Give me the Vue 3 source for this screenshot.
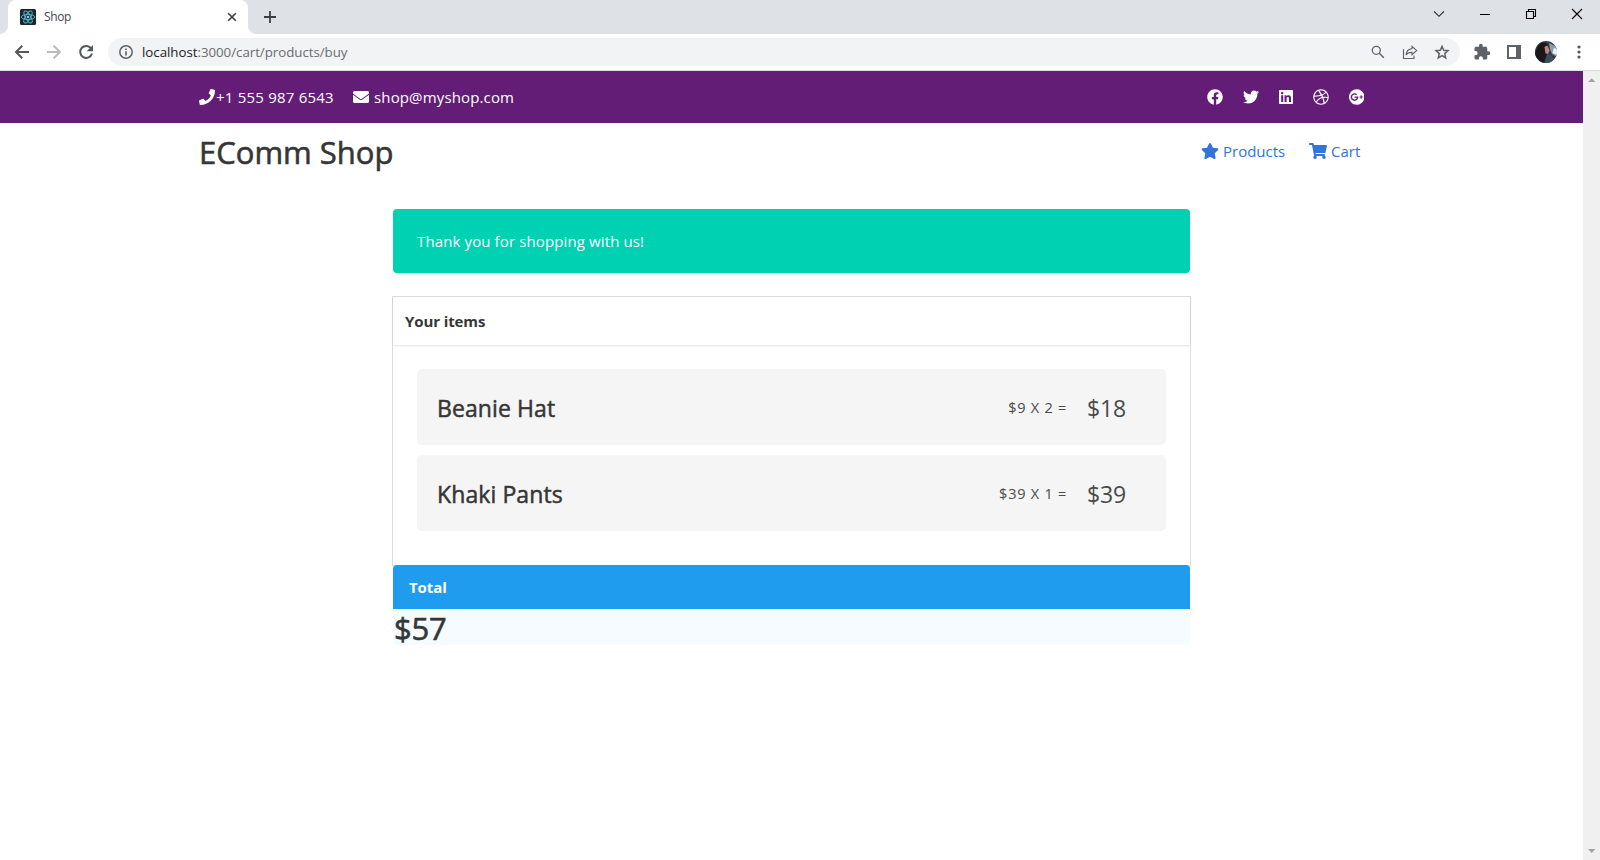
<script setup>
const socials = [
  { name: 'facebook', w: 512, d: 'M504 256C504 119 393 8 256 8S8 119 8 256c0 123.78 90.69 226.38 209.25 245V327.69h-63V256h63v-54.64c0-62.15 37-96.48 93.67-96.48 27.14 0 55.52 4.84 55.52 4.84v61h-31.28c-30.8 0-40.41 19.12-40.41 38.73V256h68.78l-11 71.69h-57.78V501C413.31 482.38 504 379.78 504 256z' },
  { name: 'twitter', w: 512, d: 'M459.37 151.716c.325 4.548.325 9.097.325 13.645 0 138.72-105.583 298.558-298.558 298.558-59.452 0-114.68-17.219-161.137-47.106 8.447.974 16.568 1.299 25.34 1.299 49.055 0 94.213-16.568 130.274-44.832-46.132-.975-84.792-31.188-98.112-72.772 6.498.974 12.995 1.624 19.818 1.624 9.421 0 18.843-1.3 27.614-3.573-48.081-9.747-84.143-51.98-84.143-102.985v-1.299c13.969 7.797 30.214 12.67 47.431 13.319-28.264-18.843-46.781-51.005-46.781-87.391 0-19.492 5.197-37.36 14.294-52.954 51.655 63.675 129.3 105.258 216.365 109.807-1.624-7.797-2.599-15.918-2.599-24.04 0-57.828 46.782-104.934 104.934-104.934 30.213 0 57.502 12.67 76.67 33.137 23.715-4.548 46.456-13.32 66.599-25.34-7.798 24.366-24.366 44.833-46.132 57.827 21.117-2.273 41.584-8.122 60.426-16.243-14.292 20.791-32.161 39.308-52.628 54.253z' },
  { name: 'linkedin', w: 448, d: 'M416 32H31.9C14.3 32 0 46.5 0 64.3v383.4C0 465.5 14.3 480 31.9 480H416c17.6 0 32-14.5 32-32.3V64.3c0-17.8-14.4-32.3-32-32.3zM135.4 416H69V202.2h66.5V416zm-33.2-243c-21.3 0-38.5-17.3-38.5-38.5S80.9 96 102.2 96c21.2 0 38.5 17.3 38.5 38.5 0 21.3-17.2 38.5-38.5 38.5zm282.1 243h-66.4V312c0-24.8-.5-56.7-34.5-56.7-34.6 0-39.9 27-39.9 54.9V416h-66.4V202.2h63.7v29.2h.9c8.9-16.8 30.6-34.5 62.9-34.5 67.2 0 79.7 44.3 79.7 101.9V416z' },
  { name: 'dribbble', w: 512, d: 'M256 8C119.252 8 8 119.252 8 256s111.252 248 248 248 248-111.252 248-248S392.748 8 256 8zm163.97 114.366c29.503 36.046 47.369 81.957 47.835 131.955-6.984-1.477-77.018-15.682-147.502-6.818-5.752-14.041-11.181-26.393-18.617-41.614 78.321-31.977 113.818-77.482 118.284-83.523zM396.421 97.87c-3.81 5.427-35.697 48.286-111.021 76.519-34.712-63.776-73.185-116.168-79.04-124.008 67.176-16.193 137.966 1.27 190.061 47.489zm-230.48-33.25c5.585 7.659 43.438 60.116 78.537 122.509-99.087 26.313-186.36 25.934-195.834 25.809C62.38 147.205 106.678 92.573 165.941 64.62zM44.17 256.323c0-2.166.043-4.322.108-6.473 9.268.19 111.92 1.513 217.706-30.146 6.064 11.868 11.857 23.915 17.174 35.949-76.599 21.575-146.194 83.527-180.531 142.306C64.794 360.405 44.17 310.73 44.17 256.323zm81.807 167.113c22.127-45.233 82.178-103.622 167.579-132.756 29.74 77.283 42.039 142.053 45.189 160.638-68.112 29.013-150.015 21.053-212.768-27.882zm248.38 8.489c-2.171-12.886-13.446-74.897-41.152-151.033 66.38-10.626 124.7 6.768 131.947 9.055-9.442 58.941-43.273 109.844-90.795 141.978z' },
  { name: 'gplus', w: 496, d: 'M248 8C111.1 8 0 119.1 0 256s111.1 248 248 248 248-111.1 248-248S384.9 8 248 8zm-70.7 372c-68.8 0-124-55.5-124-124s55.2-124 124-124c31.3 0 60.1 11 83 32.3l-33.6 32.6c-13.2-12.9-31.3-19.1-49.4-19.1-42.9 0-77.2 35.5-77.2 78.1s34.2 78.1 77.2 78.1c32.6 0 64.9-19.1 70.1-53.3h-70.1v-42.6h116.9c1.3 6.8 1.9 13.6 1.9 20.7 0 70.8-47.5 121.2-118.8 121.2zm230.2-106.2v35.5H372v-35.5h-35.5v-35.5H372v-35.5h35.5v35.5h35.2v35.5h-35.2z' },
]
const items = [
  { name: 'Beanie Hat', calc: '$9 X 2 =', sum: '$18' },
  { name: 'Khaki Pants', calc: '$39 X 1 =', sum: '$39' },
]
</script>

<template>
  <div class="window">
    <div class="tabstrip">
      <div class="tab">
        <svg class="favicon" width="16" height="16" viewBox="0 0 16 16">
          <rect width="16" height="16" rx="1.5" fill="#20232a" />
          <g fill="none" stroke="#53b9d6" stroke-width=".9">
            <ellipse cx="8" cy="8" rx="6.7" ry="2.6" />
            <ellipse cx="8" cy="8" rx="6.7" ry="2.6" transform="rotate(60 8 8)" />
            <ellipse cx="8" cy="8" rx="6.7" ry="2.6" transform="rotate(120 8 8)" />
          </g>
          <circle cx="8" cy="8" r="1.3" fill="#61dafb" />
        </svg>
        <span class="tab-title">Shop</span>
        <svg width="10" height="10" viewBox="0 0 10 10"><path d="M1.2 1.2l7.6 7.6M8.800 1.200L1.200 8.800" stroke="#3c4043" stroke-width="1.6" /></svg>
      </div>
      <svg class="plus" width="12" height="12" viewBox="0 0 12 12"><path d="M6 0v12M0 6h12" stroke="#3c4043" stroke-width="1.8" /></svg>
      <div class="controls">
        <svg width="12" height="12" viewBox="0 0 12 12"><path d="M1 3.300l5 5 5-5" fill="none" stroke="#222" stroke-width="1.1" /></svg>
        <svg width="12" height="12" viewBox="0 0 12 12"><path d="M1 6.500h10" stroke="#000" /></svg>
        <svg width="12" height="12" viewBox="0 0 12 12"><path d="M1.500 3.500h7v7h-7zM3.500 3.500v-2h7v7h-2" fill="none" stroke="#000" stroke-width="1.1" /></svg>
        <svg width="12" height="12" viewBox="0 0 12 12"><path d="M1 1l10 10M11 1L1 11" stroke="#000" stroke-width="1.1" /></svg>
      </div>
    </div>

    <div class="toolbar">
      <svg class="nav" width="16" height="16" viewBox="0 0 16 16"><path d="M15 8H2.500M8.300 1.700L2 8l6.300 6.300" fill="none" stroke="#54575b" stroke-width="2" /></svg>
      <svg class="nav" width="16" height="16" viewBox="0 0 16 16"><path d="M1 8h12.500M7.700 1.700L14 8l-6.300 6.300" fill="none" stroke="#b9bbbe" stroke-width="2" /></svg>
      <svg class="nav" width="16" height="16" viewBox="0 0 16 16"><path d="M13.300 4.700A6 6 0 1 0 14 9.500" fill="none" stroke="#54575b" stroke-width="2" /><path d="M15 1v6.300H8.700z" fill="#54575b" /></svg>
      <div class="omnibox">
        <svg width="14" height="14" viewBox="0 0 14 14"><circle cx="7" cy="7" r="6.200" fill="none" stroke="#5f6368" stroke-width="1.500" /><path d="M7 6.200v4.300M7 3.400v1.600" stroke="#5f6368" stroke-width="1.600" /></svg>
        <span class="url"><b>localhost</b>:3000/cart/products/buy</span>
        <svg class="glass" width="14" height="14" viewBox="0 0 14 14"><circle cx="5.300" cy="5.300" r="4" fill="none" stroke="#5f6368" stroke-width="1.300" /><path d="M8.300 8.300l4.500 4.500" stroke="#5f6368" stroke-width="1.500" /></svg>
        <svg class="share" width="16" height="16" viewBox="0 0 16 16"><path d="M1.500 5v9.500h10.500v-3M10 2.300l4.700 4.200L10 10.700V8.400C7.200 8.300 5.400 9 4 11c.4-3.500 2.400-6 6-6.400z" fill="none" stroke="#5f6368" stroke-width="1.100" /></svg>
        <svg width="16" height="16" viewBox="0 0 16 16"><path d="M8 2.300l1.700 4 4.300.4-3.300 2.900 1 4.300L8 11.600l-3.700 2.300 1-4.300L2 6.700l4.300-.4z" fill="none" stroke="#5f6368" stroke-width="1.500" /></svg>
      </div>
      <svg class="puzzle" width="18" height="18" viewBox="0 0 24 24"><path fill="#5f6368" d="M20.500 11H19V7c0-1.100-.9-2-2-2h-4V3.500a2.500 2.500 0 0 0-5 0V5H4c-1.100 0-2 .9-2 2v3.800h1.500a2.700 2.700 0 0 1 0 5.400H2V20c0 1.100.9 2 2 2h3.800v-1.500a2.700 2.700 0 0 1 5.400 0V22H17c1.100 0 2-.9 2-2v-4h1.500a2.500 2.500 0 0 0 0-5z" /></svg>
      <svg class="panel" width="14" height="14" viewBox="0 0 14 14"><path fill="#5f6368" fill-rule="evenodd" d="M0 0h14v14H0zM2 2v10h7V2z" /></svg>
      <svg class="avatar" width="22" height="22" viewBox="0 0 22 22">
        <defs><clipPath id="face"><circle cx="11" cy="11" r="11" /></clipPath></defs>
        <g clip-path="url(#face)">
          <rect width="22" height="22" fill="#343b44" />
          <path d="M14 2l8 4v10l-5-3-2-5z" fill="#8e9ea5" />
          <path d="M17.500 12l4.500 2V8l-3-1z" fill="#eef3f4" />
          <path d="M2 7Q6-1 12 3l2 4-1 8-3 7H0V12z" fill="#1b171b" />
          <path d="M9.500 6q3-2.500 4 .5l1 3-1.500 3.500-2.500-.5z" fill="#b98780" />
          <path d="M12 13l4 1 3 4-4 4H9z" fill="#3d4f56" />
        </g>
      </svg>
      <svg class="dots" width="4" height="14" viewBox="0 0 4 14"><g fill="#54575b"><circle cx="2" cy="2" r="1.600" /><circle cx="2" cy="7" r="1.600" /><circle cx="2" cy="12" r="1.600" /></g></svg>
    </div>

    <div class="viewport">
      <div class="page">
        <div class="topbar">
          <svg width="16" height="16" viewBox="0 0 512 512"><path fill="#fff" d="M493.400 24.600l-104-24c-11.300-2.600-22.900 3.300-27.500 13.900l-48 112c-4.200 9.800-1.400 21.300 6.900 28l60.600 49.600c-36 76.700-98.900 140.500-177.200 177.200l-49.600-60.600c-6.800-8.300-18.200-11.100-28-6.900l-112 48C3.900 366.500-2 378.100.6 389.400l24 104C27.100 504.200 36.700 512 48 512c256.100 0 464-207.500 464-464 0-11.200-7.700-20.900-18.600-23.400z" /></svg>
          <span class="phone">+1 555 987 6543</span>
          <svg width="16" height="16" viewBox="0 0 512 512"><path fill="#fff" d="M502.300 190.800c3.900-3.100 9.700-.2 9.700 4.700V400c0 26.500-21.500 48-48 48H48c-26.500 0-48-21.500-48-48V195.600c0-5 5.700-7.800 9.700-4.700 22.400 17.400 52.100 39.500 154.100 113.600 21.100 15.400 56.700 47.800 92.200 47.600 35.700.3 72-32.800 92.300-47.600 102-74.100 131.600-96.300 154-113.700zM256 320c23.200.4 56.600-29.200 73.400-41.400 132.700-96.300 142.800-104.700 173.400-128.700 5.800-4.500 9.200-11.500 9.200-18.900v-19c0-26.500-21.500-48-48-48H48c-26.500 0-48 21.500-48 48v19c0 7.400 3.400 14.300 9.200 18.900 30.600 23.900 40.700 32.400 173.400 128.700 16.800 12.200 50.200 41.800 73.400 41.400z" /></svg>
          <span class="mail">shop@myshop.com</span>
          <div class="socials">
            <svg v-for="s in socials" :key="s.name" :width="s.w / 32" height="16" :viewBox="`0 0 ${s.w} 512`"><path fill="#fff" :d="s.d" /></svg>
          </div>
        </div>

        <div class="brandbar">
          <h1>EComm Shop</h1>
          <a class="link products">
            <svg width="18" height="16" viewBox="0 0 576 512"><path fill="#3273dc" d="M259.300 17.800L194 150.200 47.900 171.500c-26.200 3.800-36.700 36.100-17.700 54.600l105.700 103-25 145.500c-4.500 26.300 23.200 46 46.400 33.700L288 439.600l130.700 68.700c23.200 12.200 50.900-7.400 46.400-33.700l-25-145.500 105.700-103c19-18.500 8.500-50.800-17.700-54.600L382 150.200 316.700 17.800c-11.700-23.600-45.600-23.900-57.400 0z" /></svg>
            <span>Products</span>
          </a>
          <a class="link cart">
            <svg width="18" height="16" viewBox="0 0 576 512"><path fill="#3273dc" d="M528.120 301.319l47.273-208C578.806 78.301 567.391 64 551.990 64H159.208l-9.166-44.810C147.758 8.021 137.930 0 126.529 0H24C10.745 0 0 10.745 0 24v16c0 13.255 10.745 24 24 24h69.883l70.248 343.435C147.325 417.100 136 435.222 136 456c0 30.928 25.072 56 56 56s56-25.072 56-56c0-15.674-6.447-29.835-16.824-40h209.647C430.447 426.165 424 440.326 424 456c0 30.928 25.072 56 56 56s56-25.072 56-56c0-22.172-12.888-41.332-31.579-50.405l5.517-24.276c3.413-15.018-8.002-29.319-23.403-29.319H218.117l-6.545-32h293.145c11.206 0 20.920-7.754 23.403-18.681z" /></svg>
            <span>Cart</span>
          </a>
        </div>

        <main class="column">
          <div class="notice"><span>Thank you for shopping with us!</span></div>
          <section class="card">
            <header class="card-header"><span>Your items</span></header>
            <div class="card-body">
              <div v-for="i in items" :key="i.name" class="item">
                <span class="item-name">{{ i.name }}</span>
                <span class="calc">{{ i.calc }}</span>
                <span class="sum">{{ i.sum }}</span>
              </div>
            </div>
          </section>
          <section class="total">
            <div class="total-header"><span>Total</span></div>
            <div class="total-sum"><span>$57</span></div>
          </section>
        </main>
      </div>
      <div class="scrollbar">
        <svg width="17" height="17" viewBox="0 0 17 17"><path d="M5 11h7.400L8.700 7.200z" fill="#a3a3a3" /></svg>
        <svg width="17" height="17" viewBox="0 0 17 17"><path d="M5 6h7.400L8.700 9.900z" fill="#a3a3a3" /></svg>
      </div>
    </div>
  </div>
</template>

<style>
body { background: #fff; overflow: hidden; }
</style>

<style scoped>
* { box-sizing: border-box; }
svg { display: block; flex: none; }
span, h1 { white-space: nowrap; }
.window { width: 1600px; height: 860px; display: flex; flex-direction: column; overflow: hidden; font-family: "Open Sans", "Noto Sans", sans-serif; font-size: 15px; color: #363636; }

.tabstrip { height: 34px; background: #dee1e6; display: flex; padding-left: 8px; }
.tab { position: relative; width: 240px; height: 34px; background: #fff; border-radius: 8px 8px 0 0; display: flex; align-items: center; padding: 0 11px 0 12px; }
.tab::before, .tab::after { content: ""; position: absolute; bottom: 0; width: 8px; height: 8px; }
.tab::before { left: -8px; background: radial-gradient(circle at 0 0, #dee1e6 7.5px, #fff 8.2px); }
.tab::after { right: -8px; background: radial-gradient(circle at 100% 0, #dee1e6 7.5px, #fff 8.2px); }
.tab-title { flex: 1; margin: -1px 0 0 8px; font-size: 12px; letter-spacing: -0.4px; color: #45484c; }
.plus { margin: 11px 0 0 16px; }
.controls { margin: 8px 17px 0 auto; display: flex; gap: 34px; }

.toolbar { height: 37px; border-bottom: 1px solid #dadce0; display: flex; align-items: center; padding: 0 19px 1px 14px; }
.nav { margin-right: 16px; }
.omnibox { width: 1352px; height: 28px; margin-left: -2px; border-radius: 14px; background: #f1f3f4; display: flex; align-items: center; padding: 0 10px 0 11px; }
.url { flex: 1; margin-left: 9px; font-size: 13.3px; letter-spacing: -.03px; color: #696c70; }
.url b { font-weight: 400; color: #202124; }
.glass { margin-right: 17px; }
.share { margin-right: 16px; }
.puzzle { margin-left: 13px; }
.panel { margin-left: 16px; }
.avatar { margin-left: 14px; }
.dots { margin-left: auto; }

.viewport { flex: 1; display: flex; min-height: 0; }
.page { width: 1583px; }
.scrollbar { width: 17px; background: #f0f0f0; display: flex; flex-direction: column; justify-content: space-between; }
.topbar { height: 52px; background: #631d76; color: #fff; display: flex; align-items: center; padding: 0 219px 0 199px; }
.phone { width: 138px; padding-left: 1px; letter-spacing: .22px; }
.mail { margin-left: 5px; letter-spacing: .14px; }
.socials { margin-left: auto; display: flex; gap: 20px; }

.brandbar { height: 58px; display: flex; align-items: center; padding: 0 222px 0 199px; }
h1 { margin: 0 auto 0 0; font-size: 31px; font-weight: 400; line-height: 40px; -webkit-text-stroke: .6px #363636; }
.link { display: flex; align-items: center; gap: 4px; margin-top: -2px; color: #3273dc; }
.link.products { width: 108px; }
.link.cart { width: 52px; }

.column { width: 797px; margin: 28px 0 0 393px; }
.notice { height: 64px; border-radius: 4px; background: #00d1b2; color: #fff; padding-left: 24px; display: flex; align-items: center; letter-spacing: .12px; }
.card { margin-top: 24px; height: 268px; box-shadow: 0 0 0 1px #dcdddd; }
.card-header { height: 48px; padding-left: 12px; display: flex; align-items: center; font-weight: 700; letter-spacing: -.1px; box-shadow: 0 1px 2px rgba(10, 10, 10, .12); }
.card-body { padding: 24px; display: flex; flex-direction: column; gap: 10px; }
.item { height: 76px; border-radius: 5px; background: #f5f5f5; display: flex; align-items: center; padding: 1px 40px 0 20px; }
.item-name { flex: 1; font-size: 23px; letter-spacing: .1px; -webkit-text-stroke: .5px #363636; }
.calc { font-size: 14.5px; color: #4a4a4a; letter-spacing: .75px; margin: -1px 20px 0 0; }
.sum { width: 39px; font-size: 23px; letter-spacing: -.2px; color: #4a4a4a; }
.total-header { height: 44px; border-radius: 4px 4px 0 0; background: #209cee; color: #fff; font-weight: 700; padding-left: 16px; display: flex; align-items: center; letter-spacing: -.1px; }
.total-sum { height: 36px; padding-left: 1px; border-radius: 0 0 4px 4px; background: #f5fbff; font-size: 31px; line-height: 38px; letter-spacing: -.2px; -webkit-text-stroke: .6px #363636; }
</style>
